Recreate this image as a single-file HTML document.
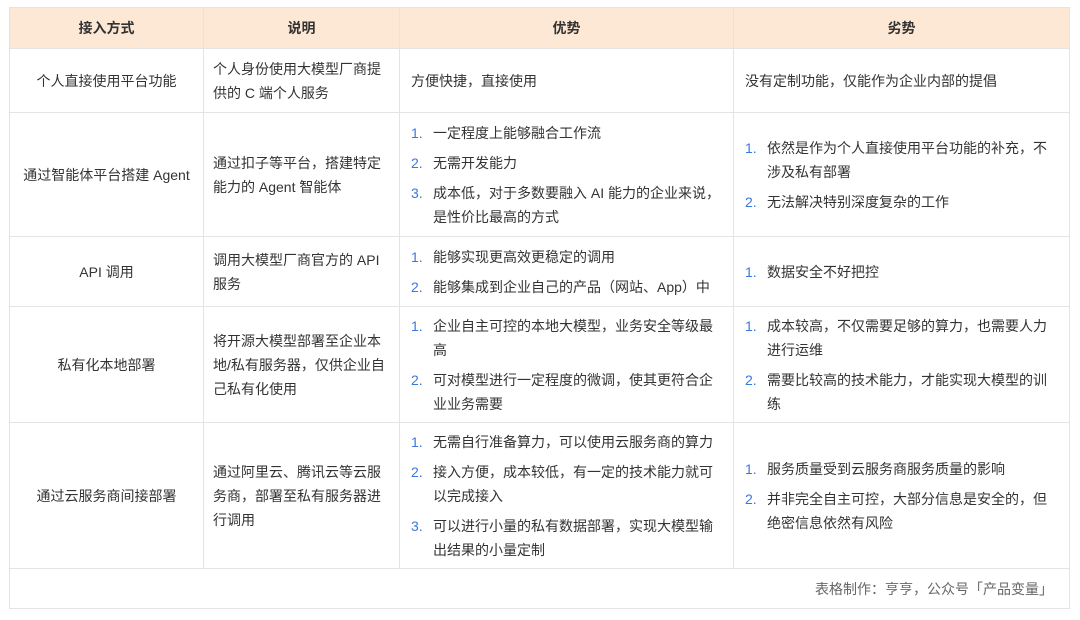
<!DOCTYPE html>
<html><head><meta charset="utf-8"><style>
*{margin:0;padding:0;box-sizing:border-box}
body{width:1080px;height:620px;background:#fff;font-family:"Liberation Sans","Noto Sans CJK SC",sans-serif;font-size:14px;color:#333;}
table{position:absolute;left:9px;top:7px;border-collapse:collapse;width:1060px;table-layout:fixed}
td,th{border:1px solid #e4e4e4;vertical-align:middle;line-height:24px;padding:0 11px}
th{background:#fce8d4;font-weight:bold;height:41px;text-align:center;color:#333}
td.c{text-align:center;padding:0 6px}
td.d{padding:0 8px 0 9px}
ol{list-style:none}
li{position:relative;padding-left:22px;margin:6px 0}
li span{position:absolute;left:0;color:#3a78e0}
.f{text-align:right;color:#666;height:40px;padding-right:16px}
</style></head><body>
<table>
<colgroup><col style="width:194px"><col style="width:196px"><col style="width:334px"><col style="width:336px"></colgroup>
<tr><th>接入方式</th><th>说明</th><th>优势</th><th>劣势</th></tr>
<tr style="height:64px"><td class="c">个人直接使用平台功能</td><td class="d">个人身份使用大模型厂商提供的 C 端个人服务</td><td>方便快捷，直接使用</td><td>没有定制功能，仅能作为企业内部的提倡</td></tr>
<tr style="height:124px"><td class="c">通过智能体平台搭建 Agent</td><td class="d">通过扣子等平台，搭建特定能力的 Agent 智能体</td><td><ol><li><span>1.</span>一定程度上能够融合工作流</li><li><span>2.</span>无需开发能力</li><li><span>3.</span>成本低，对于多数要融入 AI 能力的企业来说，是性价比最高的方式</li></ol></td><td><ol><li><span>1.</span>依然是作为个人直接使用平台功能的补充，不涉及私有部署</li><li><span>2.</span>无法解决特别深度复杂的工作</li></ol></td></tr>
<tr style="height:70px"><td class="c">API 调用</td><td class="d">调用大模型厂商官方的 API 服务</td><td><ol><li><span>1.</span>能够实现更高效更稳定的调用</li><li><span>2.</span>能够集成到企业自己的产品（网站、App）中</li></ol></td><td><ol><li><span>1.</span>数据安全不好把控</li></ol></td></tr>
<tr style="height:116px"><td class="c">私有化本地部署</td><td class="d">将开源大模型部署至企业本地/私有服务器，仅供企业自己私有化使用</td><td><ol><li><span>1.</span>企业自主可控的本地大模型，业务安全等级最高</li><li><span>2.</span>可对模型进行一定程度的微调，使其更符合企业业务需要</li></ol></td><td><ol><li><span>1.</span>成本较高，不仅需要足够的算力，也需要人力进行运维</li><li><span>2.</span>需要比较高的技术能力，才能实现大模型的训练</li></ol></td></tr>
<tr style="height:146px"><td class="c">通过云服务商间接部署</td><td class="d">通过阿里云、腾讯云等云服务商，部署至私有服务器进行调用</td><td><ol><li><span>1.</span>无需自行准备算力，可以使用云服务商的算力</li><li><span>2.</span>接入方便，成本较低，有一定的技术能力就可以完成接入</li><li><span>3.</span>可以进行小量的私有数据部署，实现大模型输出结果的小量定制</li></ol></td><td><ol><li><span>1.</span>服务质量受到云服务商服务质量的影响</li><li><span>2.</span>并非完全自主可控，大部分信息是安全的，但绝密信息依然有风险</li></ol></td></tr>
<tr><td colspan="4" class="f">表格制作：亨亨，公众号「产品变量」</td></tr>
</table>
</body></html>
